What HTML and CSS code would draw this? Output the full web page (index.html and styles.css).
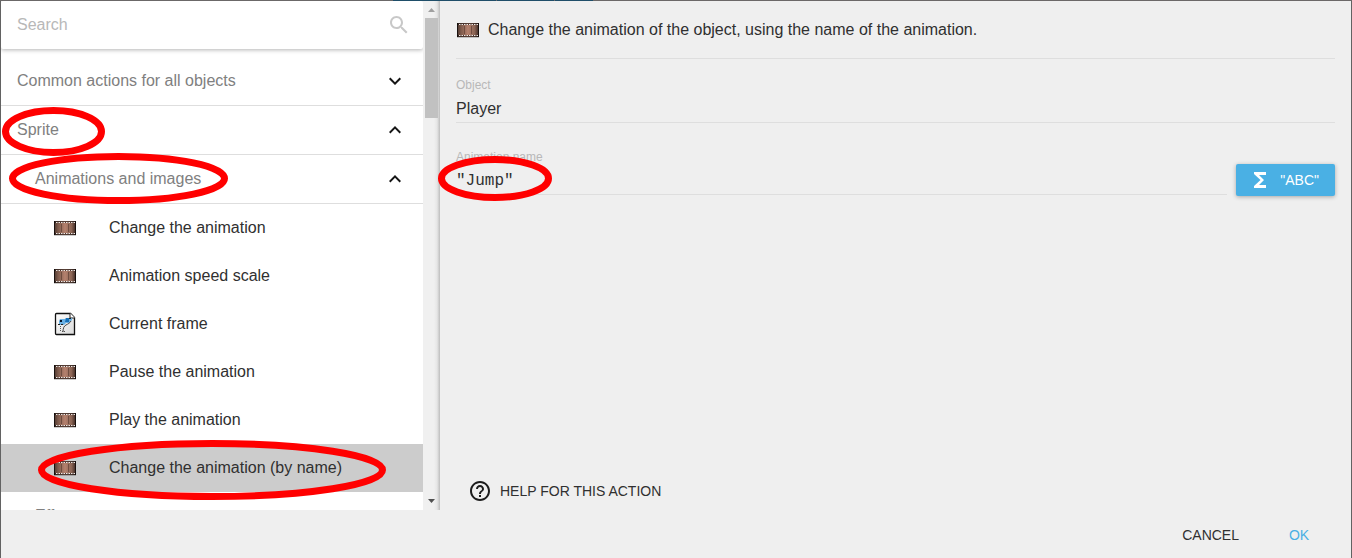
FILE: index.html
```
<!DOCTYPE html>
<html lang="en">
<head>
<meta charset="utf-8">
<title>Edit action</title>
<link rel="stylesheet" href="styles.css">
</head>
<body>
<svg class="symbols" aria-hidden="true">
  <defs>
    <linearGradient id="film-fill" x1="0" x2="1" y1="0" y2="0">
      <stop offset="0" stop-color="#4a352e"/>
      <stop offset=".18" stop-color="#7d5a4b"/>
      <stop offset=".5" stop-color="#b5816e"/>
      <stop offset=".8" stop-color="#8a6454"/>
      <stop offset="1" stop-color="#38241f"/>
    </linearGradient>
    <linearGradient id="page-fill" x1="0" x2="1" y1="0" y2="1">
      <stop offset="0" stop-color="#ffffff"/>
      <stop offset="1" stop-color="#d9d9d9"/>
    </linearGradient>
    <symbol id="film" viewBox="0 0 24 24">
      <path d="M1 5h22v14H1z" fill="url(#film-fill)"/>
      <path d="M1 5h22v2H1zM1 17h22v2H1z" fill="#1a1413" fill-opacity=".6"/>
      <path d="M1 5h1v14H1zM22 5h1v14h-1z" fill="#0d0908" fill-opacity=".8"/>
      <path d="M3 6.500h19M3 17.500h19" stroke="#f4eae6" stroke-width="1" stroke-dasharray="1.500 1"/>
      <path d="M8.500 8v8M15.500 8v8" stroke="#5d3f35" stroke-opacity=".7" stroke-width="1"/>
      <path d="M1 19.500h22" stroke="#000" stroke-opacity=".2"/>
    </symbol>
    <symbol id="frame" viewBox="0 0 24 24">
      <path d="M3.500 1.500h14l4 4v17h-18a1 1 0 0 1-1-1v-19a1 1 0 0 1 1-1z" fill="url(#page-fill)" stroke="#111" stroke-width="1.300"/>
      <path d="M17 1v5h5" fill="#fff" stroke="#222" stroke-width="1"/>
      <path d="M7 7h5l1-1h6v2l-3 3h-3l-2 2H6V9z" fill="#69afe2"/>
      <path d="M13 6h3v4h-4z" fill="#1670b8"/>
      <path d="M7 8h2v2H7z" fill="#06162a"/>
      <path d="M10 20c0-4 1-6 3-7s4-2 5-4" fill="none" stroke="#444" stroke-width="1"/>
      <path d="M7.500 14v6M9 19.500h3" stroke="#555" stroke-dasharray="1 1"/>
      <path d="M5 12.500h5M16 6.500h3" stroke="#222" stroke-dasharray="2 1"/>
    </symbol>
    <symbol id="down" viewBox="0 0 24 24"><path d="M16.590 8.590L12 13.170 7.410 8.590 6 10l6 6 6-6z"/></symbol>
    <symbol id="up" viewBox="0 0 24 24"><path d="M12 8l-6 6 1.410 1.410L12 10.830l4.590 4.580L18 14z"/></symbol>
  </defs>
</svg>

<div class="backdrop-strip" aria-hidden="true"><span class="tab tab-wide"></span><span class="tab tab-mid"></span><span class="tab tab-small"></span></div>

<main class="dialog">
  <div class="content">
    <aside class="sidebar">
      <div class="list">
        <div class="search">
          <input class="search-input" type="search" placeholder="Search" aria-label="Search">
          <svg class="icon search-icon" viewBox="0 0 24 24"><path d="M15.500 14h-.79l-.28-.27C15.410 12.590 16 11.110 16 9.500 16 5.910 13.090 3 9.500 3S3 5.910 3 9.500 5.910 16 9.500 16c1.610 0 3.090-.59 4.230-1.570l.27.28v.79l5 4.990L20.490 19l-4.990-5zm-6 0C7.010 14 5 11.990 5 9.500S7.010 5 9.500 5 14 7.010 14 9.500 11.990 14 9.500 14z"/></svg>
        </div>
        <div class="rows">
          <button class="group" type="button">Common actions for all objects<svg class="icon"><use href="#down"/></svg></button>
          <button class="group" type="button">Sprite<svg class="icon"><use href="#up"/></svg></button>
          <button class="group nested" type="button">Animations and images<svg class="icon"><use href="#up"/></svg></button>
          <button class="item" type="button"><svg class="icon"><use href="#film"/></svg>Change the animation</button>
          <button class="item" type="button"><svg class="icon"><use href="#film"/></svg>Animation speed scale</button>
          <button class="item" type="button"><svg class="icon"><use href="#frame"/></svg>Current frame</button>
          <button class="item" type="button"><svg class="icon"><use href="#film"/></svg>Pause the animation</button>
          <button class="item" type="button"><svg class="icon"><use href="#film"/></svg>Play the animation</button>
          <button class="item selected" type="button"><svg class="icon"><use href="#film"/></svg>Change the animation (by name)</button>
          <button class="group nested" type="button">Effects<svg class="icon"><use href="#down"/></svg></button>
        </div>
      </div>
      <div class="scrollbar" aria-hidden="true">
        <svg class="arrow" viewBox="0 0 17 17"><path d="M5 11l3.500-4 3.500 4z" fill="#a0a0a0"/></svg>
        <span class="thumb"></span>
        <svg class="arrow arrow-end" viewBox="0 0 17 17"><path d="M5 6h7l-3.500 4z" fill="#505050"/></svg>
      </div>
    </aside>

    <section class="panel">
      <header class="title"><svg class="icon"><use href="#film"/></svg><span>Change the animation of the object, using the name of the animation.</span></header>
      <div class="field">
        <label class="label" for="object">Object</label>
        <input class="value" id="object" type="text" value="Player">
      </div>
      <div class="field-row">
        <div class="field">
          <label class="label" for="animation">Animation name</label>
          <input class="value code" id="animation" type="text" value="&quot;Jump&quot;">
        </div>
        <button class="expression" type="button"><svg class="icon" viewBox="0 0 24 24"><path d="M18 4H6v2l6.500 6L6 18v2h12v-3h-7l5-5-5-5h7z"/></svg>"ABC"</button>
      </div>
      <button class="help" type="button"><svg class="icon" viewBox="0 0 24 24"><path d="M11 18h2v-2h-2v2zm1-16C6.480 2 2 6.480 2 12s4.480 10 10 10 10-4.480 10-10S17.520 2 12 2zm0 18c-4.410 0-8-3.590-8-8s3.590-8 8-8 8 3.590 8 8-3.590 8-8 8zm0-14c-2.210 0-4 1.790-4 4h2c0-1.100.9-2 2-2s2 .9 2 2c0 2-3 1.750-3 5h2c0-2.250 3-2.500 3-5 0-2.210-1.790-4-4-4z"/></svg>HELP FOR THIS ACTION</button>
    </section>
  </div>
  <footer class="actions">
    <button class="flat" type="button">CANCEL</button>
    <button class="flat primary" type="button">OK</button>
  </footer>
</main>

<svg class="marks" width="560" height="510" aria-hidden="true">
  <ellipse cx="53.500" cy="131.500" rx="48" ry="21"/>
  <ellipse cx="118.500" cy="178.500" rx="106" ry="22"/>
  <ellipse cx="495" cy="178.500" rx="53.500" ry="19"/>
  <ellipse cx="212" cy="470" rx="170.500" ry="26.500"/>
</svg>
</body>
</html>
```
FILE: styles.css
```
* { box-sizing: border-box; }

body {
  margin: 0;
  height: 100vh;
  display: flex;
  flex-direction: column;
  position: relative;
  overflow: hidden;
  background: #efefef;
  color: #303030;
  font: 16px/20px "Liberation Sans", Arial, sans-serif;
}

button, input {
  font: inherit;
  color: inherit;
  border: 0;
  padding: 0;
  margin: 0;
  background: none;
  border-radius: 0;
  outline: 0;
  min-width: 0;
}

button { cursor: pointer; text-align: left; }

.symbols { position: absolute; width: 0; height: 0; }

.icon {
  width: 24px;
  height: 24px;
  flex: none;
  fill: currentColor;
}

.backdrop-strip {
  display: flex;
  gap: 1px;
  height: 1px;
  flex: none;
  padding-left: 393px;
  background: #6b6868;
}

.tab { background: #1f4e69; }
.tab-wide { width: 103px; }
.tab-mid { width: 57px; }
.tab-small { width: 38px; }

.dialog {
  flex: 1;
  min-height: 0;
  display: flex;
  flex-direction: column;
  border: solid #626262;
  border-width: 0 1px;
}

.content {
  flex: 1;
  min-height: 0;
  display: grid;
  grid-template-columns: 439px minmax(0, 1fr);
}

.sidebar {
  display: flex;
  min-height: 0;
  overflow: hidden;
  background: #fff;
}

.list { flex: 1; min-width: 0; }

.search {
  display: flex;
  align-items: center;
  height: 48px;
  padding: 0 12px 0 16px;
  border-radius: 2px;
  box-shadow: 0 1px 4px rgba(0, 0, 0, .3);
}

.search-input { flex: 1; }
.search-input::placeholder { color: #b8b8b8; opacity: 1; }
.search-icon { color: #c8c8c8; }

.rows {
  display: flex;
  flex-direction: column;
  padding-top: 8px;
}

.group {
  display: flex;
  align-items: center;
  justify-content: space-between;
  height: 49px;
  padding: 0 16px;
  color: #808080;
  border-bottom: 1px solid #dedede;
}

.group .icon { color: #151515; }
.nested { padding-left: 34px; }

.item {
  display: flex;
  align-items: center;
  gap: 32px;
  height: 48px;
  padding: 0 16px 0 52px;
}

.selected { background: #ccc; }

.scrollbar {
  display: flex;
  flex-direction: column;
  align-items: center;
  width: 17px;
  background: linear-gradient(to right, #f0f0f0 11px, #e6e6e6 14px, #bdbdbd);
}

.arrow { width: 17px; height: 17px; }
.arrow-end { margin-top: auto; }
.thumb { width: 13px; height: 100px; background: #c1c1c1; }

.panel {
  display: flex;
  flex-direction: column;
  min-width: 0;
  padding: 0 16px;
}

.title {
  display: flex;
  align-items: center;
  gap: 8px;
  height: 58px;
  border-bottom: 1px solid #dedede;
}

.field {
  flex: none;
  display: flex;
  flex-direction: column;
  min-width: 0;
  padding-top: 16px;
}

.label { font-size: 12px; line-height: 20px; color: #b8b8b8; }

.value {
  width: 100%;
  height: 28px;
  border-bottom: 1px solid #dedede;
}

.code { font-family: "Liberation Mono", "Courier New", monospace; }

.field-row {
  display: flex;
  align-items: flex-end;
  gap: 9px;
  padding-top: 8px;
}

.field-row .field { flex: 1; }

.expression {
  display: flex;
  align-items: center;
  gap: 8px;
  height: 32px;
  margin-bottom: -1px;
  padding: 0 16px 0 12px;
  border-radius: 2px;
  background: #4ab0e4;
  color: #fff;
  font-size: 14px;
  box-shadow: 0 1px 4px rgba(0, 0, 0, .3);
}

.help {
  display: flex;
  align-items: center;
  gap: 8px;
  align-self: flex-start;
  height: 36px;
  margin-top: auto;
  margin-bottom: 1px;
  padding: 0 12px;
  font-size: 14px;
}

.help .icon { color: #1c1c1c; }

.actions {
  display: flex;
  flex: none;
  justify-content: flex-end;
  height: 48px;
  padding: 8px 8px 6px;
}

.flat {
  min-width: 88px;
  padding: 0 16px;
  font-size: 14px;
  text-align: center;
}

.primary { color: #4ab0e4; }

.marks {
  position: absolute;
  top: 0;
  left: 0;
  pointer-events: none;
  fill: none;
  stroke: #f00;
  stroke-width: 7px;
}
```
